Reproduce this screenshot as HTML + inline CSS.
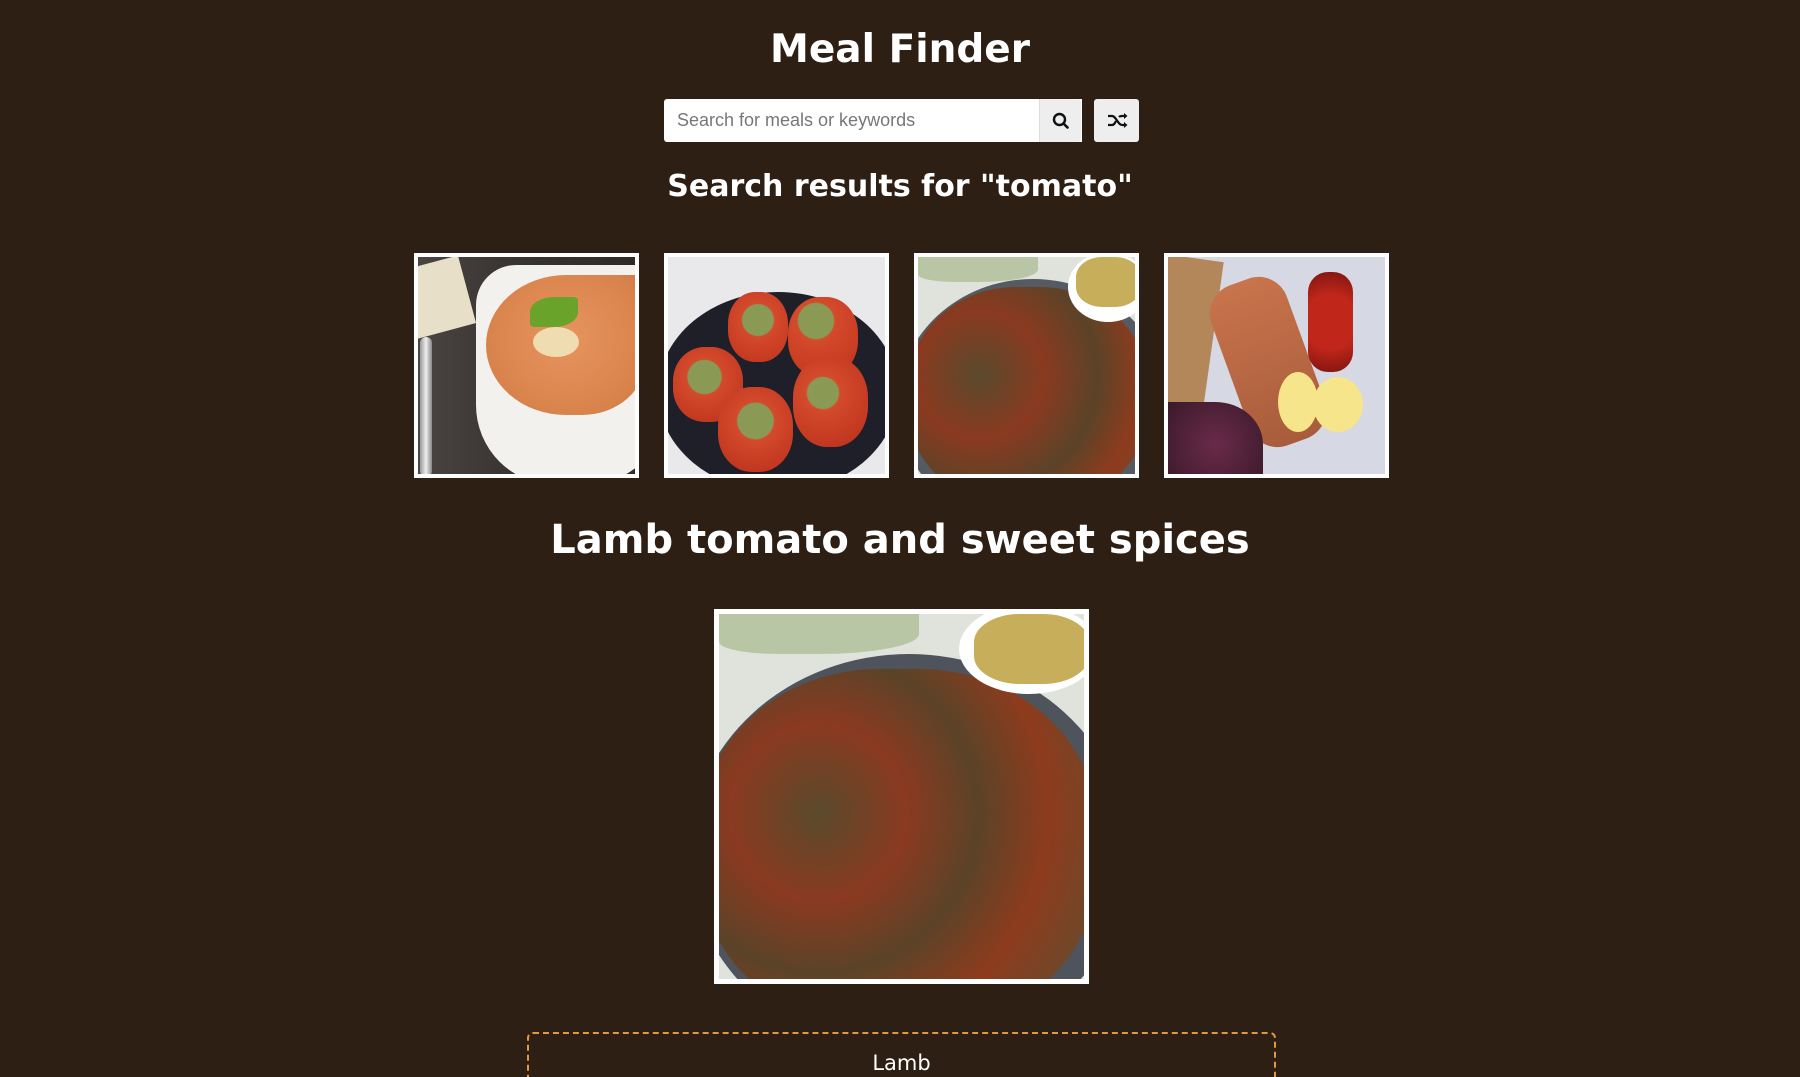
<!DOCTYPE html>
<html style="overflow:hidden;height:1077px"><head><meta charset="utf-8"><style>
*{box-sizing:border-box;margin:0;padding:0}
body{width:1800px;height:1077px;overflow:hidden;background:#2d1f14;font-family:"DejaVu Sans",Verdana,sans-serif;color:#fff;position:relative}
.abs{position:absolute}
h1{position:absolute;left:0;width:1800px;text-align:center;top:27px;font-size:39px;font-weight:bold}
.search{left:664px;top:99px;width:418px;height:43px;background:#fff;border-radius:3px 0 0 3px;}
.search span{position:absolute;left:13px;top:11px;font-family:"Liberation Sans",Arial,sans-serif;font-size:18px;color:#777}
.sbtn{left:1039px;top:99px;width:42px;height:43px;background:#eee;border-radius:0 3px 3px 0;border-left:1px solid #ddd}
.rbtn{left:1094px;top:99px;width:45px;height:43px;background:#eee;border-radius:3px}
h2{position:absolute;left:0;width:1800px;text-align:center;top:169px;font-size:30px;font-weight:bold}
.thumb{position:absolute;top:253px;width:225px;height:225px;border:4px solid #fff;overflow:hidden}
h3{position:absolute;left:0;width:1800px;text-align:center;top:517px;font-size:40px;font-weight:bold}
.big{position:absolute;left:714px;top:609px;width:375px;height:375px;border:5px solid #fff;overflow:hidden}
.box{left:527px;top:1032px;width:749px;height:45px;border:2px dashed #e0993e;border-bottom:none;border-radius:6px 6px 0 0}
.box span{position:absolute;left:0;width:100%;text-align:center;top:17px;font-size:21px}
</style></head><body>
<h1>Meal Finder</h1>
<div class="abs search"><span>Search for meals or keywords</span></div>
<div class="abs sbtn"><svg width="42" height="43" viewBox="0 0 42 43"><circle cx="19.5" cy="20.5" r="5.5" fill="none" stroke="#111" stroke-width="2.4"/><path d="M23.5 24.5l4 4" stroke="#111" stroke-width="2.6" stroke-linecap="round"/></svg></div>
<div class="abs rbtn"><svg width="45" height="43" viewBox="0 0 45 43"><path d="M14 17h4c4 0 6 9 10 9h3M14 26h4c2 0 3-2 4-4M25 18c1-1 2-1 3-1h3" fill="none" stroke="#111" stroke-width="2.2"/><path d="M30 14l3.5 3-3.5 3zM30 23l3.5 3-3.5 3z" fill="#111"/></svg></div>
<h2>Search results for "tomato"</h2>

<div class="thumb" style="left:414px;background:linear-gradient(90deg,#4a4542 0%,#3a3533 40%,#2e2a28 100%)">
<div class="abs" style="width:60px;height:70px;background:#e8dfc9;transform:rotate(-15deg);left:-10px;top:5px"></div>
<div class="abs" style="left:2px;top:80px;width:12px;height:140px;background:linear-gradient(90deg,#999,#eee,#888);border-radius:6px"></div>
<div class="abs" style="left:58px;top:8px;width:190px;height:220px;background:#f2f1ee;border-radius:40px 0 80px 80px"></div>
<div class="abs" style="left:68px;top:18px;width:160px;height:140px;background:radial-gradient(ellipse at 50% 45%,#e8945f,#d9834c 70%,#c97645);border-radius:50% 0 40% 50%"></div>
<div class="abs" style="left:112px;top:40px;width:48px;height:30px;background:#6aa32a;border-radius:50% 10%"></div>
<div class="abs" style="left:115px;top:70px;width:46px;height:30px;background:#efdcb0;border-radius:50%"></div>
</div>

<div class="thumb" style="left:664px;background:#e9e9ec">
<div class="abs" style="left:-10px;top:35px;width:240px;height:200px;background:#1e1f28;border-radius:50%"></div>
<div class="abs" style="left:60px;top:35px;width:60px;height:70px;background:radial-gradient(circle at 50% 40%,#8a9a55 30%,#d44a2c 32%,#c0321c);border-radius:45%"></div>
<div class="abs" style="left:120px;top:40px;width:70px;height:80px;background:radial-gradient(circle at 40% 30%,#8a9a55 25%,#d44a2c 27%,#c0321c);border-radius:45%"></div>
<div class="abs" style="left:5px;top:90px;width:70px;height:75px;background:radial-gradient(circle at 45% 40%,#8a9a55 28%,#d44a2c 30%,#b92e1a);border-radius:45%"></div>
<div class="abs" style="left:50px;top:130px;width:75px;height:85px;background:radial-gradient(circle at 50% 40%,#8a9a55 28%,#d44a2c 30%,#b92e1a);border-radius:45%"></div>
<div class="abs" style="left:125px;top:100px;width:75px;height:90px;background:radial-gradient(circle at 40% 40%,#8a9a55 22%,#d44a2c 24%,#b92e1a);border-radius:45%"></div>
</div>

<div class="thumb" style="left:914px;background:#dfe3dc">
<div class="abs" style="left:-20px;top:22px;width:270px;height:250px;background:#555a63;border-radius:50%"></div>
<div class="abs" style="left:-10px;top:30px;width:240px;height:220px;background:radial-gradient(circle at 30% 40%,#5a4a2c,#8a3a20 30%,#5b4328 55%,#8e3b1d 75%,#6a4a2c);border-radius:45%"></div>
<div class="abs" style="left:150px;top:-5px;width:80px;height:70px;background:#fff;border-radius:50%"></div>
<div class="abs" style="left:158px;top:0;width:65px;height:50px;background:#c7ae5a;border-radius:40%"></div>
<div class="abs" style="left:0;top:0;width:120px;height:25px;background:#b8c6a5;border-radius:0 0 50% 30%"></div>
</div>

<div class="thumb" style="left:1164px;background:#d6d8e3">
<div class="abs" style="left:-20px;top:0;width:60px;height:230px;background:#b4875a;transform:rotate(8deg)"></div>
<div class="abs" style="left:60px;top:20px;width:80px;height:170px;background:linear-gradient(#c8744c,#a85c3b);border-radius:30px;transform:rotate(-20deg)"></div>
<div class="abs" style="left:140px;top:15px;width:45px;height:100px;background:radial-gradient(circle,#c0261a 50%,#7a1510);border-radius:20px"></div>
<div class="abs" style="left:110px;top:115px;width:40px;height:60px;background:#f6e58a;border-radius:50%"></div>
<div class="abs" style="left:145px;top:120px;width:50px;height:55px;background:#f6e58a;border-radius:50%"></div>
<div class="abs" style="left:0;top:145px;width:95px;height:85px;background:radial-gradient(circle,#6a2a4a,#3a1a2a);border-radius:0 50% 0 0"></div>
</div>

<h3>Lamb tomato and sweet spices</h3>
<div class="big" style="background:#dfe3dc">
<div class="abs" style="left:-30px;top:40px;width:440px;height:400px;background:#4e535c;border-radius:50%"></div>
<div class="abs" style="left:-20px;top:55px;width:400px;height:360px;background:radial-gradient(circle at 30% 40%,#5a4a2c,#8a3a20 25%,#5b4328 45%,#8e3b1d 65%,#6a4a2c 85%);border-radius:45%"></div>
<div class="abs" style="left:240px;top:-10px;width:140px;height:90px;background:#fff;border-radius:50%"></div>
<div class="abs" style="left:255px;top:0;width:115px;height:70px;background:#c7ae5a;border-radius:40%"></div>
<div class="abs" style="left:0;top:0;width:200px;height:40px;background:#b8c6a5;border-radius:0 0 50% 30%"></div>
</div>
<div class="abs box"><span>Lamb</span></div>
</body></html>
